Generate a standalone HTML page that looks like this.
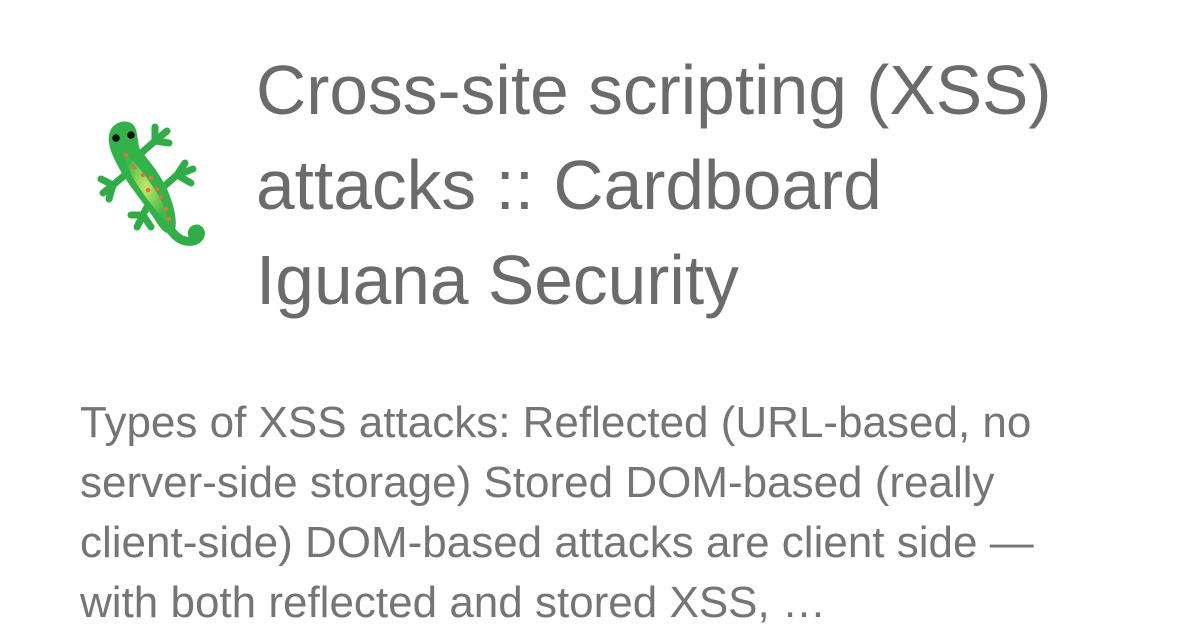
<!DOCTYPE html>
<html><head><meta charset="utf-8"><style>
html,body{margin:0;padding:0;background:#fff;width:1200px;height:630px;overflow:hidden}
body{font-family:"Liberation Sans","DejaVu Sans",sans-serif;color:#6b6b6b;position:relative}
.t{position:absolute;left:256px;top:43px;width:900px;font-size:69.5px;line-height:95px}
.t div{white-space:nowrap}
.d{position:absolute;left:80px;top:393px;width:1100px;font-size:44px;line-height:60px;color:#757575}
.d div{white-space:nowrap}
svg{position:absolute;left:95px;top:115px}
</style></head><body>
<svg width="112" height="135" viewBox="0 0 112 135">
<defs><radialGradient id="g" cx="50%" cy="50%" r="50%"><stop offset="0" stop-color="#c6e86a"/><stop offset="1" stop-color="#40b84a"/></radialGradient></defs>
<g stroke="#2fae48" stroke-width="7" stroke-linecap="round" fill="none">
<path d="M44 40 L60 26 M60 26 L60 12 M60 26 L72 16 M60 26 L74 28"/>
<path d="M30 60 L18 70 M18 70 L6 64 M18 70 L8 78 M18 70 L14 84"/>
<path d="M66 74 L82 60 M82 60 L90 48 M82 60 L98 54 M82 60 L96 68"/>
<path d="M54 88 L48 100 M48 100 L36 100 M48 100 L42 112 M48 100 L56 112"/>
<path d="M72 108 C78 122 88 128 98 126 C106 124 108 116 102 114 C98 114 96 118 98 120" stroke-width="9"/>
</g>
<path d="M14 20 C16 6 34 2 40 12 C44 22 42 30 46 36 C58 50 70 66 76 84 C80 96 82 106 80 116 C76 122 68 118 62 108 C52 92 38 76 28 60 C20 46 12 32 14 20Z" fill="#33b24a"/>
<path d="M28 36 C38 44 52 62 62 78 C68 88 72 98 74 108 C68 104 60 94 52 84 C42 70 32 56 28 36Z" fill="url(#g)"/>
<circle cx="21" cy="23" r="3.8" fill="#111"/><circle cx="36" cy="20" r="3.8" fill="#111"/>
<g fill="#f26b3a"><circle cx="31" cy="40" r="2.2"/><circle cx="39" cy="52" r="2.2"/><circle cx="48" cy="60" r="2.2"/><circle cx="56" cy="63" r="2.2"/><circle cx="53" cy="75" r="2.2"/><circle cx="62" cy="74" r="2.2"/><circle cx="66" cy="82" r="2.2"/><circle cx="71" cy="94" r="2.2"/><circle cx="74" cy="104" r="2.2"/></g>
</svg>
<div class="t"><div>Cross-site scripting (XSS)</div><div>attacks :: Cardboard</div><div>Iguana Security</div></div>
<div class="d"><div>Types of XSS attacks: Reflected (URL-based, no</div><div>server-side storage) Stored DOM-based (really</div><div>client-side) DOM-based attacks are client side —</div><div>with both reflected and stored XSS, …</div></div>
</body></html>
